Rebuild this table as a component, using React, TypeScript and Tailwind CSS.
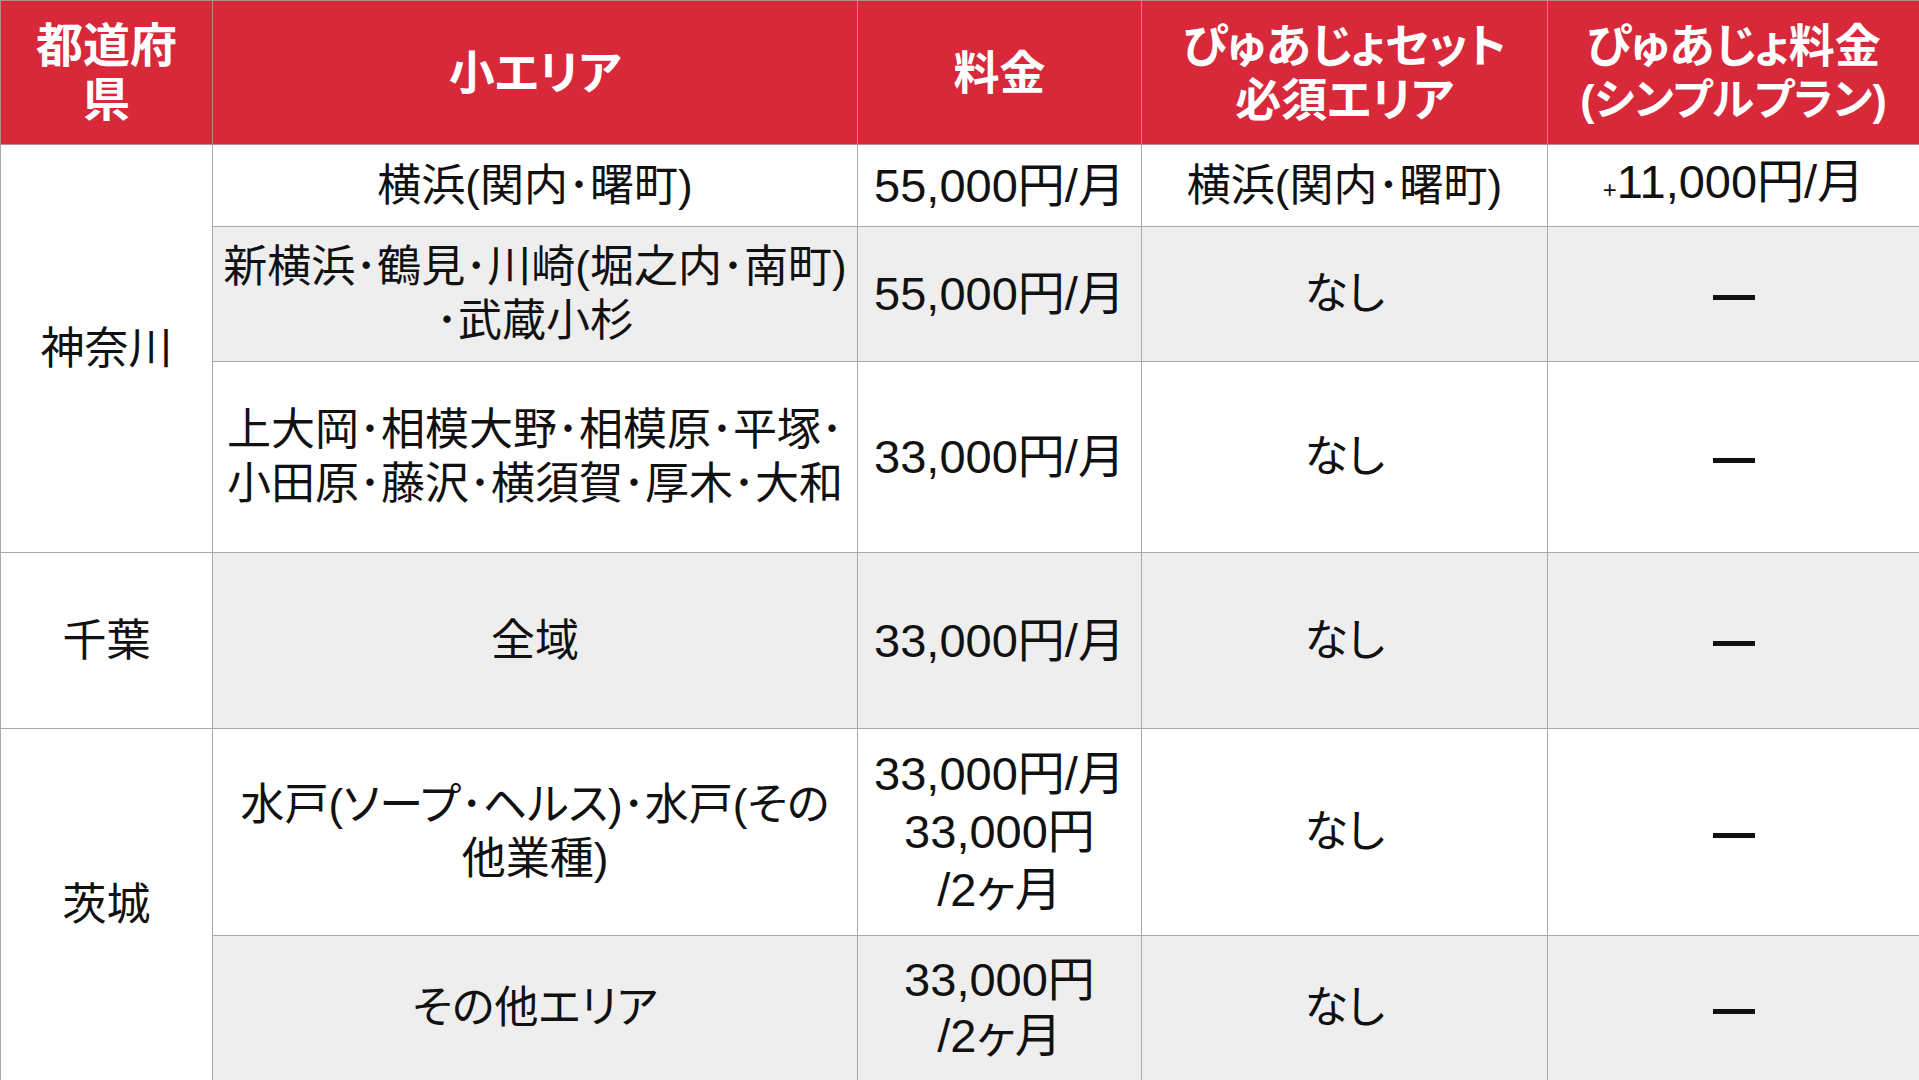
const FONT = "[font-family:'Liberation_Sans','Noto_Sans_CJK_JP',sans-serif]";

type Sub = {
  area: string[];
  price: string[];
  set: string;
  plan: "plus" | "none";
  h: string;
  gray: boolean;
  priceLeading?: string;
};

type Group = { pref: string; subs: Sub[] };

const groups: Group[] = [
  {
    pref: "神奈川",
    subs: [
      { area: ["横浜(関内･曙町)"], price: ["55,000円/月"], set: "横浜(関内･曙町)", plan: "plus", h: "h-[82px]", gray: false },
      { area: ["新横浜･鶴見･川崎(堀之内･南町)", "･武蔵小杉"], price: ["55,000円/月"], set: "なし", plan: "none", h: "h-[135px]", gray: true },
      { area: ["上大岡･相模大野･相模原･平塚･", "小田原･藤沢･横須賀･厚木･大和"], price: ["33,000円/月"], set: "なし", plan: "none", h: "h-[191px]", gray: false },
    ],
  },
  {
    pref: "千葉",
    subs: [{ area: ["全域"], price: ["33,000円/月"], set: "なし", plan: "none", h: "h-[176px]", gray: true }],
  },
  {
    pref: "茨城",
    subs: [
      { area: ["水戸(ソープ･ヘルス)･水戸(その", "他業種)"], price: ["33,000円/月", "33,000円", "/2ヶ月"], set: "なし", plan: "none", h: "h-[207px]", gray: false, priceLeading: "leading-[58px]" },
      { area: ["その他エリア"], price: ["33,000円", "/2ヶ月"], set: "なし", plan: "none", h: "h-[145px]", gray: true, priceLeading: "leading-[56px]" },
    ],
  },
];

function Lines({ lines }: { lines: string[] }) {
  return (
    <>
      {lines.map((l, i) => (
        <div key={i}>{l}</div>
      ))}
    </>
  );
}

export default function App() {
  const cell = "border border-[#a9a9a9] p-0 text-center align-middle whitespace-nowrap";
  return (
    <div className={`w-[1919px] h-[1080px] overflow-hidden bg-white text-[#111] ${FONT}`}>
      <table className="w-[1919px] table-fixed border-collapse">
        <colgroup>
          <col className="w-[212px]" />
          <col className="w-[645px]" />
          <col className="w-[284px]" />
          <col className="w-[406px]" />
          <col className="w-[372px]" />
        </colgroup>
        <thead>
          <tr className="h-[144px] bg-[#d8293b] text-white font-bold text-[46px] leading-[54px] [font-feature-settings:'palt']">
            <th className={`${cell} border-[#b98a8f]`}>
              <div className="text-[47px]">都道府</div>
              <div className="text-[47px]">県</div>
            </th>
            <th className={`${cell} border-[#b98a8f]`}>小エリア</th>
            <th className={`${cell} border-[#b98a8f]`}>料金</th>
            <th className={`${cell} border-[#b98a8f]`}>
              <div>ぴゅあじょセット</div>
              <div>必須エリア</div>
            </th>
            <th className={`${cell} border-[#b98a8f]`}>
              <div>ぴゅあじょ料金</div>
              <div className="text-[43px]">(シンプルプラン)</div>
            </th>
          </tr>
        </thead>
        <tbody className="text-[44px] leading-[54px] [font-feature-settings:'palt']">
          {groups.map((g) =>
            g.subs.map((s, i) => (
              <tr key={g.pref + i} className={s.h}>
                {i === 0 && (
                  <td rowSpan={g.subs.length} className={`${cell} bg-white`}>
                    {g.pref}
                  </td>
                )}
                <td className={`${cell} ${s.gray ? "bg-[#eeeeee]" : "bg-white"}`}>
                  <Lines lines={s.area} />
                </td>
                <td className={`${cell} text-[47px] ${s.priceLeading ?? ""} ${s.gray ? "bg-[#eeeeee]" : "bg-white"}`}>
                  <Lines lines={s.price} />
                </td>
                <td className={`${cell} ${s.gray ? "bg-[#eeeeee]" : "bg-white"}`}>{s.set}</td>
                <td className={`${cell} ${s.gray ? "bg-[#eeeeee]" : "bg-white"}`}>
                  {s.plan === "plus" ? (
                    <span className="text-[47px]">
                      <span className="text-[24px]">+</span>11,000円/月
                    </span>
                  ) : (
                    <span className="inline-block w-[42px] h-[5px] bg-[#111] align-middle" />
                  )}
                </td>
              </tr>
            ))
          )}
        </tbody>
      </table>
    </div>
  );
}
